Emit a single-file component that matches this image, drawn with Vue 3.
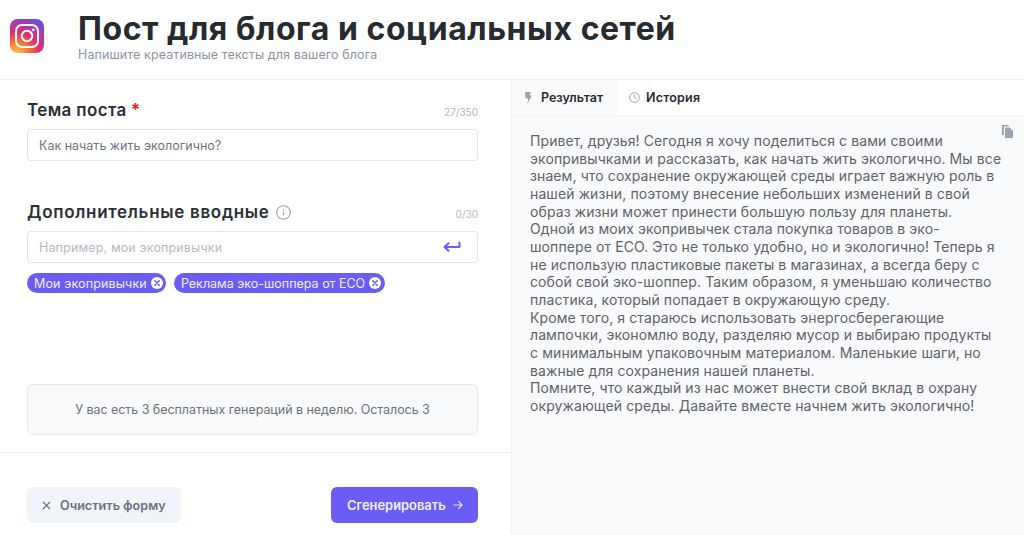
<script setup>
const lines = [
  'Привет, друзья! Сегодня я хочу поделиться с вами своими',
  'экопривычками и рассказать, как начать жить экологично. Мы все',
  'знаем, что сохранение окружающей среды играет важную роль в',
  'нашей жизни, поэтому внесение небольших изменений в свой',
  'образ жизни может принести большую пользу для планеты.',
  'Одной из моих экопривычек стала покупка товаров в эко-',
  'шоппере от ECO. Это не только удобно, но и экологично! Теперь я',
  'не использую пластиковые пакеты в магазинах, а всегда беру с',
  'собой свой эко-шоппер. Таким образом, я уменьшаю количество',
  'пластика, который попадает в окружающую среду.',
  'Кроме того, я стараюсь использовать энергосберегающие',
  'лампочки, экономлю воду, разделяю мусор и выбираю продукты',
  'с минимальным упаковочным материалом. Маленькие шаги, но',
  'важные для сохранения нашей планеты.',
  'Помните, что каждый из нас может внести свой вклад в охрану',
  'окружающей среды. Давайте вместе начнем жить экологично!'
]
const tags = ['Мои экопривычки', 'Реклама эко-шоппера от ECO']
</script>

<template>
  <div class="page">
    <header class="head">
      <svg class="logo" width="34" height="34" viewBox="0 0 34 34">
        <defs>
          <radialGradient id="ig" cx="0.2" cy="1.05" r="1.2">
            <stop offset="0" stop-color="#fdc84f" />
            <stop offset="0.3" stop-color="#f77b2e" />
            <stop offset="0.55" stop-color="#e1306c" />
            <stop offset="0.8" stop-color="#a83bb5" />
            <stop offset="1" stop-color="#5b51d8" />
          </radialGradient>
        </defs>
        <rect width="34" height="34" rx="8" fill="url(#ig)" />
        <rect x="6" y="6" width="22" height="22" rx="6" fill="none" stroke="#fff" stroke-width="2" />
        <circle cx="17" cy="17" r="5.2" fill="none" stroke="#fff" stroke-width="2" />
        <circle cx="23.2" cy="10.8" r="1.4" fill="#fff" />
      </svg>
      <div class="titles">
        <h1>Пост для блога и социальных сетей</h1>
        <p>Напишите креативные тексты для вашего блога</p>
      </div>
    </header>
    <main class="body">
      <section class="left">
        <div class="form">
          <div class="label-row first">
            <span class="label">Тема поста <b>*</b></span>
            <span class="count">27/350</span>
          </div>
          <div class="field">Как начать жить экологично?</div>
          <div class="label-row second">
            <span class="label wide">Дополнительные вводные
              <svg class="info" width="15" height="15" viewBox="0 0 15 15" fill="none" stroke="#98a3b2" stroke-width="1.1">
                <circle cx="7.5" cy="7.5" r="6.8" />
                <path d="M7.5 6.8v3.8M7.5 4.2v1.2" />
              </svg>
            </span>
            <span class="count">0/30</span>
          </div>
          <div class="field placeholder">
            <span>Например, мои экопривычки</span>
            <svg width="18" height="12" viewBox="0 0 18 12" fill="none" stroke="#6b5cf6" stroke-width="2" stroke-linecap="round" stroke-linejoin="round">
              <path d="M16.5 1.5v4.5H2M5.5 2.2 1.5 6l4 3.8" />
            </svg>
          </div>
          <div class="tags">
            <span v-for="t in tags" :key="t" class="tag">
              {{ t }}
              <svg width="12" height="12" viewBox="0 0 12 12">
                <circle cx="6" cy="6" r="6" fill="#fff" />
                <path d="M3.8 3.8l4.4 4.4M8.2 3.8l-4.4 4.4" stroke="#6b5cf6" stroke-width="1.6" stroke-linecap="round" />
              </svg>
            </span>
          </div>
          <div class="notice">У вас есть 3 бесплатных генераций в неделю. Осталось 3</div>
        </div>
        <footer class="actions">
          <button class="btn ghost">
            <svg width="9" height="9" viewBox="0 0 9 9" fill="none" stroke="#6b7280" stroke-width="1.2">
              <path d="M1 1l7 7M8 1l-7 7" />
            </svg>
            Очистить форму
          </button>
          <button class="btn primary">
            Сгенерировать
            <svg width="10" height="10" viewBox="0 0 10 10" fill="none" stroke="#e8e6ff" stroke-width="1.2" stroke-linecap="round" stroke-linejoin="round">
              <path d="M.8 5h8.2M5.6 1.4 9 5 5.6 8.6" />
            </svg>
          </button>
        </footer>
      </section>
      <section class="right">
        <nav class="tabs">
          <div class="tab active">
            <svg width="8" height="12" viewBox="0 0 8 12" fill="#9aa3af"><path d="M1 0h6L5.4 3.6H7.6L3.4 12l.9-5.6H1.6z" /></svg>
            Результат
          </div>
          <div class="tab second-tab">
            <svg width="11" height="11" viewBox="0 0 11 11" fill="none" stroke="#9aa3af" stroke-width="1">
              <circle cx="5.5" cy="5.5" r="4.8" />
              <path d="M5.5 2.8v2.9l1.8 1" />
            </svg>
            История
          </div>
        </nav>
        <article class="result">
          <svg class="copy" width="11" height="13" viewBox="0 0 11 13" fill="#9aa3af">
            <path d="M0 0h6.5v1.5H2V10H0z" />
            <path d="M3 2.5h4.5L11 6v7H3z" />
          </svg>
          <div v-for="(l, i) in lines" :key="i" class="line">{{ l }}</div>
        </article>
      </section>
    </main>
  </div>
</template>

<style>
html, body { margin: 0; background: #fff; }
</style>

<style scoped>
.page {
  width: 1024px;
  height: 535px;
  overflow: hidden;
  display: flex;
  flex-direction: column;
  font-family: Inter, "Noto Sans", sans-serif;
  color: #262a30;
}
.head {
  height: 80px;
  flex: none;
  box-sizing: border-box;
  border-bottom: 1px solid #eceef1;
  display: flex;
  align-items: flex-start;
  padding: 19px 0 0 10px;
  gap: 34px;
}
.titles { margin-top: -10px; }
h1 {
  margin: 0;
  font-size: 32px;
  line-height: 39px;
  font-weight: 700;
  letter-spacing: 0.55px;
  color: #272b30;
}
.titles p {
  margin: 0;
  font-size: 12.5px;
  line-height: 14px;
  color: #8b95a3;
  letter-spacing: 0.1px;
}
.body { flex: 1; display: flex; min-height: 0; }
.left {
  width: 512px;
  flex: none;
  box-sizing: border-box;
  border-right: 1px solid #f0f1f4;
  display: flex;
  flex-direction: column;
}
.form {
  height: 373px;
  flex: none;
  box-sizing: border-box;
  border-bottom: 1px solid #f0f1f4;
  padding: 0 33px 0 27px;
  display: flex;
  flex-direction: column;
}
.label-row { display: flex; justify-content: space-between; align-items: flex-end; }
.label-row.first { margin-top: 19px; }
.label-row.second { margin-top: 40px; }
.label {
  font-size: 17px;
  line-height: 22px;
  font-weight: 600;
  letter-spacing: 0.35px;
  color: #2b2f35;
  display: flex;
  align-items: center;
  gap: 6px;
}
.label.wide { letter-spacing: 0.7px; }
.label b { color: #e8262b; font-weight: 700; margin-left: -2px; }
.count { font-size: 10px; line-height: 14px; color: #b3bac4; margin-bottom: 2px; }
.field {
  margin-top: 8px;
  height: 32px;
  flex: none;
  box-sizing: border-box;
  border: 1px solid #e1e4e9;
  border-radius: 4px;
  padding: 0 11px;
  display: flex;
  align-items: center;
  justify-content: space-between;
  font-size: 12.5px;
  color: #6c737c;
}
.field.placeholder { color: #b4bac3; padding-right: 16px; letter-spacing: 0.15px; }
.tags { display: flex; gap: 8px; margin-top: 10px; }
.tag {
  height: 20px;
  border-radius: 10px;
  background: #6b5cf6;
  color: #f1efff;
  font-size: 12.5px;
  letter-spacing: 0.05px;
  display: flex;
  align-items: center;
  gap: 4px;
  padding: 0 4px 0 7px;
}
.tag:first-child { padding-right: 3px; letter-spacing: 0.14px; }
.tag:last-child { letter-spacing: 0px; }
.notice {
  margin-top: 91px;
  height: 51px;
  flex: none;
  box-sizing: border-box;
  border: 1px solid #e6e8ec;
  border-radius: 6px;
  background: #f9fafb;
  display: flex;
  align-items: center;
  justify-content: center;
  font-size: 12.5px;
  letter-spacing: -0.05px;
  color: #6d737b;
}
.actions {
  flex: 1;
  display: flex;
  justify-content: space-between;
  align-items: flex-start;
  padding: 34px 33px 0 27px;
}
.btn {
  height: 36px;
  border: 0;
  border-radius: 6px;
  font-family: inherit;
  font-size: 13px;
  font-weight: 600;
  display: flex;
  align-items: center;
  gap: 9px;
}
.ghost { width: 154px; background: #f1f4f9; color: #6b7280; padding: 0 0 0 15px; font-size: 12.6px; }
.primary { width: 147px; background: #6b5cf6; color: #f2f0ff; padding: 0 0 0 16px; gap: 7px; font-size: 12.9px; }
.right {
  flex: 1;
  background: #f9fafb;
  display: flex;
  flex-direction: column;
  min-width: 0;
}
.tabs { height: 35px; flex: none; display: flex; background: #fff; border-bottom: 1px solid #f0f1f4; }
.tab {
  display: flex;
  align-items: center;
  gap: 9px;
  padding: 0 12px;
  font-size: 12.5px;
  font-weight: 600;
  color: #272b30;
}
.second-tab { gap: 6px; letter-spacing: 0.2px; }
.tab.active { background: #f9fafb; width: 105px; box-sizing: border-box; }
.result {
  position: relative;
  padding: 16px 0 0 18px;
  font-size: 14px;
  line-height: 17.67px;
  letter-spacing: 0.1px;
  color: #5f636a;
}
.line { white-space: nowrap; }
.copy { position: absolute; top: 9px; right: 11px; }
</style>
